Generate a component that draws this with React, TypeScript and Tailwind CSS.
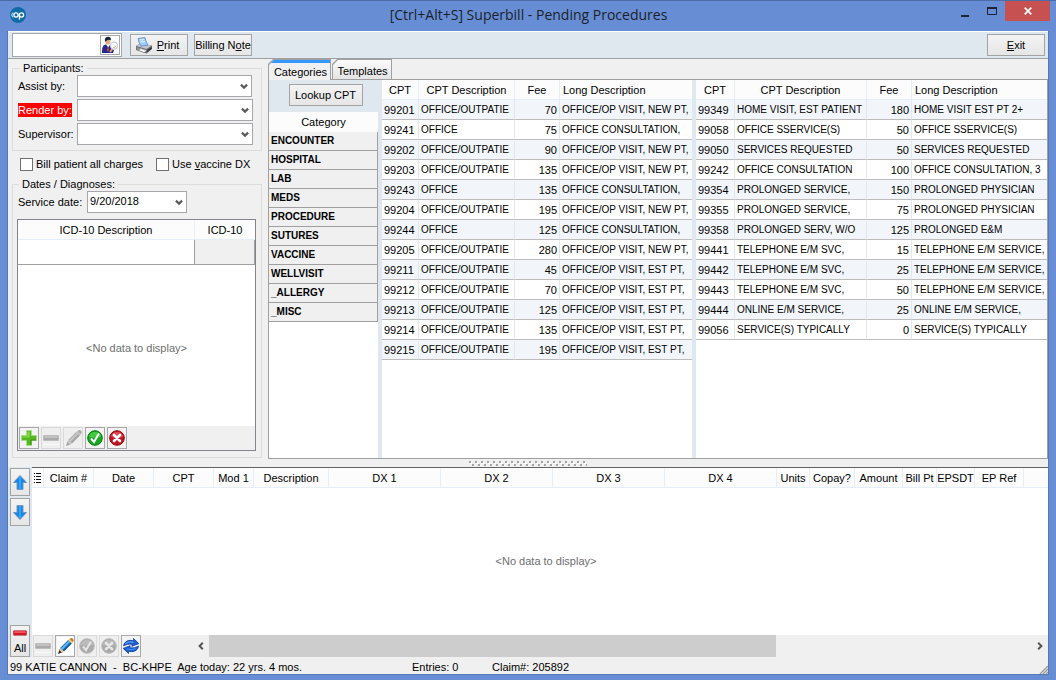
import React from "react";

const categories = ["ENCOUNTER", "HOSPITAL", "LAB", "MEDS", "PROCEDURE", "SUTURES", "VACCINE", "WELLVISIT", "_ALLERGY", "_MISC"];

type Row = [string, string, string, string];

const leftRows: Row[] = [
  ["99201", "OFFICE/OUTPATIE", "70", "OFFICE/OP VISIT, NEW PT,"],
  ["99241", "OFFICE", "75", "OFFICE CONSULTATION,"],
  ["99202", "OFFICE/OUTPATIE", "90", "OFFICE/OP VISIT, NEW PT,"],
  ["99203", "OFFICE/OUTPATIE", "135", "OFFICE/OP VISIT, NEW PT,"],
  ["99243", "OFFICE", "135", "OFFICE CONSULTATION,"],
  ["99204", "OFFICE/OUTPATIE", "195", "OFFICE/OP VISIT, NEW PT,"],
  ["99244", "OFFICE", "125", "OFFICE CONSULTATION,"],
  ["99205", "OFFICE/OUTPATIE", "280", "OFFICE/OP VISIT, NEW PT,"],
  ["99211", "OFFICE/OUTPATIE", "45", "OFFICE/OP VISIT, EST PT,"],
  ["99212", "OFFICE/OUTPATIE", "70", "OFFICE/OP VISIT, EST PT,"],
  ["99213", "OFFICE/OUTPATIE", "125", "OFFICE/OP VISIT, EST PT,"],
  ["99214", "OFFICE/OUTPATIE", "135", "OFFICE/OP VISIT, EST PT,"],
  ["99215", "OFFICE/OUTPATIE", "195", "OFFICE/OP VISIT, EST PT,"],
];

const rightRows: Row[] = [
  ["99349", "HOME VISIT, EST PATIENT", "180", "HOME VISIT EST PT 2+"],
  ["99058", "OFFICE SSERVICE(S)", "50", "OFFICE SSERVICE(S)"],
  ["99050", "SERVICES REQUESTED", "50", "SERVICES REQUESTED"],
  ["99242", "OFFICE CONSULTATION", "100", "OFFICE CONSULTATION, 3"],
  ["99354", "PROLONGED SERVICE,", "150", "PROLONGED PHYSICIAN"],
  ["99355", "PROLONGED SERVICE,", "75", "PROLONGED PHYSICIAN"],
  ["99358", "PROLONGED SERV, W/O", "125", "PROLONGED E&M"],
  ["99441", "TELEPHONE E/M SVC,", "15", "TELEPHONE E/M SERVICE,"],
  ["99442", "TELEPHONE E/M SVC,", "25", "TELEPHONE E/M SERVICE,"],
  ["99443", "TELEPHONE E/M SVC,", "50", "TELEPHONE E/M SERVICE,"],
  ["99444", "ONLINE E/M SERVICE,", "25", "ONLINE E/M SERVICE,"],
  ["99056", "SERVICE(S) TYPICALLY", "0", "SERVICE(S) TYPICALLY"],
];

const claimColumns: { name: string; width: string }[] = [
  { name: "Claim #", width: "w-[50px]" },
  { name: "Date", width: "w-[60px]" },
  { name: "CPT", width: "w-[60px]" },
  { name: "Mod 1", width: "w-10" },
  { name: "Description", width: "w-[75px]" },
  { name: "DX 1", width: "w-28" },
  { name: "DX 2", width: "w-28" },
  { name: "DX 3", width: "w-28" },
  { name: "DX 4", width: "w-28" },
  { name: "Units", width: "w-[33px]" },
  { name: "Copay?", width: "w-[45px]" },
  { name: "Amount", width: "w-12" },
  { name: "Bill Pt", width: "w-[34px]" },
  { name: "EPSDT", width: "w-[38px]" },
  { name: "EP Ref", width: "w-[49px]" },
];

const raised = "border border-[#a3a3a3] bg-linear-to-b from-[#f3f3f3] to-[#e6e6e6]";

function Chevron() {
  return (
    <svg className="pointer-events-none absolute right-1 top-2 h-2 w-2" viewBox="0 0 8 8" aria-hidden="true">
      <path d="M0.9 1.6 4 4.6 7.1 1.6" fill="none" stroke="#5c5c5c" strokeWidth="2.2" />
    </svg>
  );
}

function Drop({ id, width, value = "" }: { id: string; width: string; value?: string }) {
  return (
    <div className={`relative h-[22px] ${width}`}>
      <select id={id} defaultValue={value} className="block h-full w-full appearance-none border border-[#a6a6ab] bg-white pb-0.5 pl-0.5 text-[11px] leading-4 text-black">
        <option value={value}>{value}</option>
      </select>
      <Chevron />
    </div>
  );
}

function IconButton({ label, disabled, children }: { label: string; disabled?: boolean; children: React.ReactNode }) {
  return (
    <button
      type="button"
      aria-label={label}
      disabled={disabled}
      className={`flex h-[22px] w-5 items-center justify-center border ${disabled ? "border-[#d9d9d9] bg-[#efefef]" : "border-[#a8a8a8] bg-[#f3f3f3]"}`}
    >
      {children}
    </button>
  );
}

function PlusIcon() {
  return (
    <svg width="16" height="16" viewBox="0 0 16 16">
      <path d="M5.5.5h5v5h5v5h-5v5h-5v-5h-5v-5h5z" fill="#57b820" stroke="#a5dc85" />
      <path d="M6.5 1.5h2v6h-7v-1h5z" fill="#8ddb55" />
      <path d="M10 10h5M10 10v5" stroke="#378a10" />
    </svg>
  );
}

function MinusIcon({ red = false }: { red?: boolean }) {
  return (
    <svg width="16" height="16" viewBox="0 0 16 16">
      <rect x=".5" y="5.5" width="15" height="5" rx=".5" fill={red ? "#d81424" : "#a9a9a9"} stroke={red ? "#b04a50" : "#bcbcbc"} />
      <path d="M1.5 7h13" stroke={red ? "#ff6a72" : "#cccccc"} strokeWidth="1.5" />
      <path d="M0 14.5h16" stroke={red ? "none" : "#fafafa"} />
    </svg>
  );
}

function PencilIcon({ gray = false }: { gray?: boolean }) {
  return (
    <svg width="17" height="18" viewBox="0 0 17 18">
      {!gray && <rect width="17" height="18" fill="#fff" />}
      <path d="M1 17 2.6 12.2 5.7 15.2z" fill={gray ? "#a0a0a0" : "#2b2b2b"} />
      <path d="M2.3 13 3.5 11.3 6.7 14.3 5 15.7z" fill={gray ? "#c8c8c8" : "#f2c58d"} />
      <path d="M3.2 11 11.2 2.900 14.9 6.5 7 14.600z" fill={gray ? "#a5a5a5" : "#155ca8"} />
      <path d="M3.900 11.300 11.700 3.400 13.300 5.100 5.500 12.900z" fill={gray ? "#c6c6c6" : "#5ab4ee"} />
      <path d="M11.2 2.9 12.4 1.900 15.900 5.300 14.900 6.500z" fill={gray ? "#c0c0c0" : "#f1d26c"} />
      <path d="M12.500 2Q14.300.3 16 1.700 17.300 3.300 15.800 5.200z" fill={gray ? "#aaa" : "#d47a26"} />
    </svg>
  );
}

function CheckIcon({ gray = false }: { gray?: boolean }) {
  return (
    <svg width="16" height="16" viewBox="0 0 16 16">
      <circle cx="8" cy="8" r="7.3" fill={gray ? "#ababab" : "#16a81e"} stroke={gray ? "#b9b9b9" : "#087810"} />
      <path d="M2 7a6 5 0 0 1 12 0Q8 8 2 7" fill={gray ? "#bcbcbc" : "#45c944"} />
      <path d="m4 8.500 3 3.500 5-8.500" fill="none" stroke={gray ? "#e6e6e6" : "#fff"} strokeWidth="2" />
    </svg>
  );
}

function CrossIcon({ gray = false }: { gray?: boolean }) {
  return (
    <svg width="16" height="16" viewBox="0 0 16 16">
      <circle cx="8" cy="8" r="7.3" fill={gray ? "#a9a9a9" : "#c41220"} stroke={gray ? "#b9b9b9" : "#8e0712"} />
      <path d="M2 7a6 5 0 0 1 12 0Q8 8 2 7" fill={gray ? "#bababa" : "#dc4952"} />
      <path d="m5 5 6 6m0-6-6 6" stroke={gray ? "#e6e6e6" : "#fff"} strokeWidth="2.6" strokeLinecap="round" />
    </svg>
  );
}

function RefreshIcon() {
  return (
    <svg width="18" height="18" viewBox="0 0 18 18">
      <path d="M1.500 8.800Q2.500 3.800 8 3.300L11.500 3.800V1.500L16.800 6.600 9.800 9.300 10.300 7.200Q5.500 6.400 1.500 8.800z" fill="#1a5fd6" stroke="#0b3c9c" strokeWidth=".8" />
      <path d="M16.500 9.200Q15.500 14.200 10 14.700L6.500 14.200V16.500L1.200 11.400 8.200 8.700 7.700 10.800Q12.500 11.600 16.500 9.200z" fill="#1a5fd6" stroke="#0b3c9c" strokeWidth=".8" />
      <path d="M3.500 6.500Q6.500 4 11.500 5.300" fill="none" stroke="#6fb0ff" />
      <path d="M5 12Q10 13.300 13.500 11.700" fill="none" stroke="#4f98f5" />
    </svg>
  );
}

function ArrowIcon({ down = false }: { down?: boolean }) {
  return (
    <svg width="16" height="17" viewBox="0 0 16 17" className={down ? "rotate-180" : ""}>
      <path d="M8 1.5 14.5 8.5H11V15.5H5V8.5H1.5z" fill="#1289ea" stroke="#7a94ba" strokeWidth="1" />
      <path d="M8 3v12" stroke="#3aa2f5" strokeWidth="2" />
    </svg>
  );
}

function PrinterIcon() {
  return (
    <svg width="18" height="17" viewBox="0 0 18 17">
      <path d="M1 9 5 6.500 17 8.500V12L11.500 16.500 1 13z" fill="#606468" />
      <path d="M1 9 5 6.500 17 8.500 11.500 12z" fill="#c4c8cb" />
      <path d="M1.500 10v2.500L11 15.500V12.500z" fill="#8d9296" />
      <path d="M3 1.500 10 .5Q10.500 4 13 8.200L6 9.200Q3.800 6 3 1.500z" fill="#9ecdfb" stroke="#5c87c8" strokeWidth=".8" />
      <path d="M5 3 9 2.500M5.500 5 10 4.500" stroke="#e8f5ff" />
      <path d="M3 13 6 11.500 12 13.500 9 15.600z" fill="#f5f5f5" stroke="#777" strokeWidth=".5" />
      <path d="M12 14.500 16.500 11" stroke="#303338" strokeWidth="1.500" />
    </svg>
  );
}

function PatientIcon() {
  return (
    <svg width="18" height="18" viewBox="0 0 18 18">
      <path d="M1 17Q.5 9 4.500 8.500L9 9 13 14.500 12 17z" fill="#262a86" />
      <path d="M5 8.300 7.300 11.500 9 8.500z" fill="#fff" />
      <path d="m7 10 1 4-1.300 2-.8-2z" fill="#d64545" />
      <ellipse cx="6.800" cy="5.200" rx="2.600" ry="3.200" fill="#e0ac87" />
      <path d="M3.900 5Q3.300 1 7.200.8 10.400 1 9.800 4.300 7 3 4.700 5.500z" fill="#16263b" />
      <path d="m9 16 2.800-3.500" stroke="#e8a07c" strokeWidth="2" />
      <circle cx="13" cy="9.600" r="3.700" fill="#f7f9fc" stroke="#c3c2cc" />
      <path d="M12 11.500q2 .5 3-1.800" fill="none" stroke="#e3b48a" />
    </svg>
  );
}

function CodeTable({ rows, widths }: { rows: Row[]; widths: [string, string, string] }) {
  return (
    <table className="w-full table-fixed border-separate border-spacing-0">
      <colgroup>
        <col className={widths[0]} />
        <col className={widths[1]} />
        <col className={widths[2]} />
        <col />
      </colgroup>
      <thead>
        <tr className="h-5 bg-[#fcfcfd]">
          {["CPT", "CPT Description", "Fee"].map((h) => (
            <th key={h} className="overflow-hidden whitespace-nowrap border-b border-r border-[#e6eef8] p-0 text-center font-normal">{h}</th>
          ))}
          <th className="whitespace-nowrap border-b border-[#e6eef8] py-0 pl-[3px] pr-0 text-left font-normal">Long Description</th>
        </tr>
      </thead>
      <tbody>
        {rows.map(([code, desc, fee, long]) => (
          <tr key={code} className="h-5 odd:bg-[#f2f6fa] even:bg-white">
            <td className="border-b border-r border-b-[#bcbcbc] border-r-[#dfe7f0] py-0 pl-0.5 pr-0">{code}</td>
            <td className="overflow-hidden whitespace-nowrap border-b border-r border-b-[#bcbcbc] border-r-[#dfe7f0] py-0 pl-0.5 pr-0 text-[10px]">{desc}</td>
            <td className="border-b border-r border-b-[#bcbcbc] border-r-[#dfe7f0] py-0 pl-0 pr-0.5 text-right">{fee}</td>
            <td className="overflow-hidden whitespace-nowrap border-b border-b-[#bcbcbc] py-0 pl-0.5 pr-0 text-[10px]">{long}</td>
          </tr>
        ))}
      </tbody>
    </table>
  );
}

function TitleBar() {
  return (
    <header className="flex h-[31px] shrink-0 items-start border-t border-[#4a6da8]">
      <svg className="ml-2.5 mt-1.5" width="16" height="16" viewBox="0 0 16 16" aria-label="Office Practicum">
        <circle cx="8" cy="8" r="8" fill="#116ba5" />
        <path d="M3.3 5.7 1.5 8 3.3 10.3" fill="none" stroke="#a8d0ea" strokeWidth="1.2" />
        <circle cx="6" cy="8" r="2.1" fill="none" stroke="#fff" strokeWidth="1.3" />
        <circle cx="11.5" cy="8" r="2.1" fill="none" stroke="#fff" strokeWidth="1.3" />
        <path d="M9.4 8v4.6" stroke="#fff" strokeWidth="1.3" />
      </svg>
      <h1 className="flex-1 pl-20 pt-1 text-center font-['Open_Sans','Noto_Sans',sans-serif] text-[14px] leading-5 text-[#1b1f2a]">[Ctrl+Alt+S] Superbill - Pending Procedures</h1>
      <button type="button" aria-label="Minimize" className="flex h-5 w-7 items-center justify-center pt-1">
        <svg width="10" height="10" viewBox="0 0 10 10"><path d="M1 8h8" stroke="#1e2430" strokeWidth="2" /></svg>
      </button>
      <button type="button" aria-label="Maximize" className="flex h-5 w-[26px] items-center justify-center">
        <svg width="10" height="8" viewBox="0 0 10 8"><path d="M.5 1v6.500h9V1" fill="none" stroke="#1e2430" /><path d="M0 1h10" stroke="#1e2430" strokeWidth="2" /></svg>
      </button>
      <button type="button" aria-label="Close" className="mr-1.5 flex h-5 w-[45px] items-center justify-center bg-[#c75050]">
        <svg width="8" height="8" viewBox="0 0 8 8"><path d="m.7.7 6.600 6.600m0-6.600L.7 7.300" stroke="#fff" strokeWidth="1.700" /></svg>
      </button>
    </header>
  );
}

function Toolbar() {
  return (
    <div className="flex h-7 shrink-0 items-center border-b border-t border-b-[#a0a0a0] border-t-white bg-[#dfe7ef] pl-1 pr-[3px]">
      <div className="flex h-6 w-[110px] items-center border border-[#a6a6ab] bg-white pr-px">
        <input aria-label="Patient" className="h-full min-w-0 flex-1 bg-transparent px-1 outline-none" />
        <button type="button" aria-label="Find patient" className="flex h-5 w-5 items-center justify-center border border-[#a8a8a8] bg-white"><PatientIcon /></button>
      </div>
      <button type="button" className={`ml-2 flex h-[22px] w-[58px] items-center justify-center gap-1 pr-1 ${raised}`}>
        <PrinterIcon />
        <span><u>P</u>rint</span>
      </button>
      <button type="button" className={`ml-1.5 h-[22px] w-[58px] whitespace-nowrap ${raised}`}>Billing N<u>o</u>te</button>
      <button type="button" className={`ml-auto h-[22px] w-[58px] ${raised}`}><u>E</u>xit</button>
    </div>
  );
}

function LeftPanel() {
  return (
    <div className="flex w-[260px] shrink-0 flex-col gap-1.5 pb-px pl-1 pr-1.5 pt-0.5">
      <fieldset className="border border-[#dcdcdc] pb-[5px] pl-[5px]">
        <legend className="ml-0.5 h-3.5 px-[3px] leading-[14px]">Participants:</legend>
        <div className="grid grid-cols-[59px_176px] items-center gap-y-0.5">
          <label htmlFor="assist">Assist by:</label>
          <Drop id="assist" width="w-[175px]" />
          <label htmlFor="render" className="justify-self-start bg-[#ff0000] text-white">Render by:</label>
          <Drop id="render" width="w-44" />
          <label htmlFor="supervisor">Supervisor:</label>
          <Drop id="supervisor" width="w-44" />
        </div>
      </fieldset>
      <div className="flex h-3.5 items-center pl-2">
        <label className="flex w-[136px] items-center gap-[3px]">
          <input type="checkbox" className="h-[13px] w-[13px] appearance-none border border-[#707070] bg-white checked:bg-[#3c3c3c]" />
          Bill patient all charges
        </label>
        <label className="flex items-center gap-[3px]">
          <input type="checkbox" className="h-[13px] w-[13px] appearance-none border border-[#707070] bg-white checked:bg-[#3c3c3c]" />
          <span>Use <u>v</u>accine DX</span>
        </label>
      </div>
      <fieldset className="border border-[#dcdcdc] pb-1.5 pl-1 pr-[5px]">
        <legend className="ml-0.5 h-3.5 px-[3px] leading-[14px]">Dates / Diagnoses:</legend>
        <div className="flex items-center pl-px">
          <label htmlFor="service-date" className="w-[69px]">Service date:</label>
          <Drop id="service-date" width="w-[100px]" value="9/20/2018" />
        </div>
        <div className="mt-1.5 flex h-[232px] flex-col border border-[#84848c] bg-white">
          <table className="w-full table-fixed border-separate border-spacing-0">
            <colgroup>
              <col />
              <col className="w-[60px]" />
            </colgroup>
            <thead>
              <tr className="h-5 bg-[#fcfcfd]">
                <th className="border-b border-r border-[#e6eef8] p-0 font-normal">ICD-10 Description</th>
                <th className="border-b border-[#e6eef8] p-0 font-normal">ICD-10</th>
              </tr>
            </thead>
            <tbody>
              <tr className="h-[25px]">
                <td className="border-b border-r border-[#a0a0a0] p-0" />
                <td className="border-b border-r border-[#a0a0a0] bg-[#f0f0f0] p-0" />
              </tr>
            </tbody>
          </table>
          <div className="flex flex-1 items-center justify-center pt-1 text-[#6e6e6e]">&lt;No data to display&gt;</div>
          <div className="flex h-6 items-center gap-0.5 bg-[#f0f0f0] pl-px">
            <IconButton label="Add"><PlusIcon /></IconButton>
            <IconButton label="Remove" disabled><MinusIcon /></IconButton>
            <IconButton label="Edit" disabled><PencilIcon gray /></IconButton>
            <IconButton label="Accept"><CheckIcon /></IconButton>
            <IconButton label="Cancel"><CrossIcon /></IconButton>
          </div>
        </div>
      </fieldset>
    </div>
  );
}

function CategoryPanel() {
  const tab = "bg-[#a0a0a0] p-px pb-0 [clip-path:polygon(5px_0,100%_0,100%_100%,0_100%,0_5px)]";
  return (
    <div className="flex min-w-0 flex-1 flex-col">
      <div role="tablist" className="flex h-5 shrink-0 items-end gap-px">
        <button type="button" role="tab" aria-selected="true" className={`relative -mb-px h-[21px] w-[63px] ${tab}`}>
          <span className="block h-full border-t-[3px] border-[#3399ff] bg-[#f0f0f0] pl-0.5 leading-[18px] [clip-path:polygon(5px_0,100%_0,100%_100%,0_100%,0_5px)]">Categories</span>
        </button>
        <button type="button" role="tab" aria-selected="false" className={`h-5 w-[60px] ${tab}`}>
          <span className="block h-full bg-linear-to-b from-[#fbfbfb] to-[#e4e4e4] pl-px pt-0.5 leading-[19px] [clip-path:polygon(5px_0,100%_0,100%_100%,0_100%,0_5px)]">Templates</span>
        </button>
      </div>
      <div className="flex flex-1 border border-[#a0a0a0] bg-[#dfe7ef]">
        <div className="flex w-[109px] shrink-0 flex-col">
          <div className="flex h-8 items-center justify-center pl-1">
            <button type="button" className={`mb-0.5 h-[22px] w-[74px] ${raised}`}>Lookup CPT</button>
          </div>
          <div className="flex-1 bg-white">
            <table className="w-full border-separate border-spacing-0">
              <thead>
                <tr className="h-5 bg-[#fcfcfd]"><th className="p-0 font-normal">Category</th></tr>
              </thead>
              <tbody>
                {categories.map((c) => (
                  <tr key={c} className="h-[19px]">
                    <td className="border-b border-r border-[#a0a0a0] bg-[#f0f0f0] py-0 pl-0.5 pr-0 text-[10px] font-bold">{c}</td>
                  </tr>
                ))}
              </tbody>
            </table>
          </div>
        </div>
        <div className="ml-1 w-[310px] shrink-0 bg-white">
          <CodeTable rows={leftRows} widths={["w-[37px]", "w-24", "w-[45px]"]} />
        </div>
        <div className="ml-1 min-w-0 flex-1 bg-white">
          <CodeTable rows={rightRows} widths={["w-[39px]", "w-[132px]", "w-[45px]"]} />
        </div>
      </div>
    </div>
  );
}

function Splitter() {
  return (
    <div className="flex h-2 shrink-0 items-center justify-center">
      <svg width="118" height="5" viewBox="0 0 118 5" aria-hidden="true">
        <defs>
          <pattern id="grip" width="6" height="5" patternUnits="userSpaceOnUse">
            <path d="M0 0h2v2H0zM3 3h2v2H3z" fill="#a2a2a2" />
            <path d="M2 1h1v2H1V2h1zM5 4h1v1H5z" fill="#fff" />
          </pattern>
        </defs>
        <rect width="118" height="5" fill="url(#grip)" />
      </svg>
    </div>
  );
}

function ScrollArrow({ right = false }: { right?: boolean }) {
  return (
    <button type="button" aria-label={right ? "Scroll right" : "Scroll left"} className="flex h-[22px] w-[17px] shrink-0 items-center justify-center">
      <svg width="8" height="8" viewBox="0 0 8 8">
        <path d={right ? "M2.2.8 5.4 4 2.2 7.2" : "M5.8.8 2.6 4 5.8 7.2"} fill="none" stroke="#555" strokeWidth="2" />
      </svg>
    </button>
  );
}

function ClaimPanel() {
  return (
    <div className="flex min-h-[190px] flex-1">
      <div className="flex w-6 shrink-0 flex-col items-center gap-0.5 bg-[#dfe7ef] pt-px">
        <button type="button" aria-label="Move up" className={`flex h-7 w-5 items-center justify-center ${raised}`}><ArrowIcon /></button>
        <button type="button" aria-label="Move down" className={`flex h-7 w-5 items-center justify-center ${raised}`}><ArrowIcon down /></button>
        <button type="button" className={`mt-auto flex h-8 w-5 flex-col items-center ${raised}`}>
          <MinusIcon red />
          <span className="leading-4">All</span>
        </button>
      </div>
      <div className="flex min-w-0 flex-1 flex-col border-t border-[#646464] bg-white">
        <div className="overflow-hidden">
          <table className="w-full table-fixed border-separate border-spacing-0">
            <colgroup>
              <col className="w-3" />
              {claimColumns.map((c) => <col key={c.name} className={c.width} />)}
              <col />
            </colgroup>
            <thead>
              <tr className="h-5 bg-[#fcfcfd]">
                <th aria-label="Columns" className="border-b border-r border-[#e6eef8] p-0">
                  <svg className="ml-0.5" width="7" height="10" viewBox="0 0 7 10">
                    <path d="M0 .5h1m1 0h5M0 3.5h1m1 0h5M0 6.5h1m1 0h5M0 9.5h1m1 0h5" stroke="#111" />
                  </svg>
                </th>
                {claimColumns.map((c) => (
                  <th key={c.name} className="whitespace-nowrap border-b border-r border-[#e6eef8] p-0 text-center font-normal">{c.name}</th>
                ))}
                <th className="border-b border-[#e6eef8] p-0" />
              </tr>
            </thead>
          </table>
        </div>
        <div className="flex flex-1 items-center justify-center pb-0.5 pl-3 text-[#6e6e6e]">&lt;No data to display&gt;</div>
        <div className="flex h-[22px] shrink-0 bg-[#f0f0f0]">
          <div className="flex w-40 shrink-0 gap-0.5 pl-px">
            <IconButton label="Remove claim line" disabled><MinusIcon /></IconButton>
            <IconButton label="Edit claim line"><PencilIcon /></IconButton>
            <IconButton label="Accept claim line" disabled><CheckIcon gray /></IconButton>
            <IconButton label="Cancel claim line" disabled><CrossIcon gray /></IconButton>
            <IconButton label="Refresh"><RefreshIcon /></IconButton>
          </div>
          <ScrollArrow />
          <div className="flex-1"><div className="h-full w-[69%] bg-[#cdcdcd]" /></div>
          <ScrollArrow right />
        </div>
      </div>
    </div>
  );
}

export default function App() {
  return (
    <div className="flex min-h-screen flex-col bg-[#678ed4] font-['Liberation_Sans',Arial,sans-serif] text-[11px] leading-[14px] text-black">
      <TitleBar />
      <main className="mx-[7px] mb-[5px] flex flex-1 flex-col border border-t-0 border-[#5578b8] bg-[#f0f0f0]">
        <Toolbar />
        <div className="flex shrink-0">
          <LeftPanel />
          <CategoryPanel />
        </div>
        <Splitter />
        <ClaimPanel />
        <footer className="flex h-[17px] shrink-0 items-start whitespace-pre pl-0.5">
          <span className="w-[402px] pt-[3px]">99 KATIE CANNON  -  BC-KHPE  Age today: 22 yrs. 4 mos.</span>
          <span className="w-20 pt-[3px]">Entries: 0</span>
          <span className="pt-[3px]">Claim#: 205892</span>
          <svg className="ml-auto mt-2" width="9" height="9" viewBox="0 0 9 9" aria-hidden="true">
            <path d="M1 9 9 1M4 9l5-5M7 9l2-2" stroke="#9a9a9a" strokeWidth="1.3" />
          </svg>
        </footer>
      </main>
    </div>
  );
}
